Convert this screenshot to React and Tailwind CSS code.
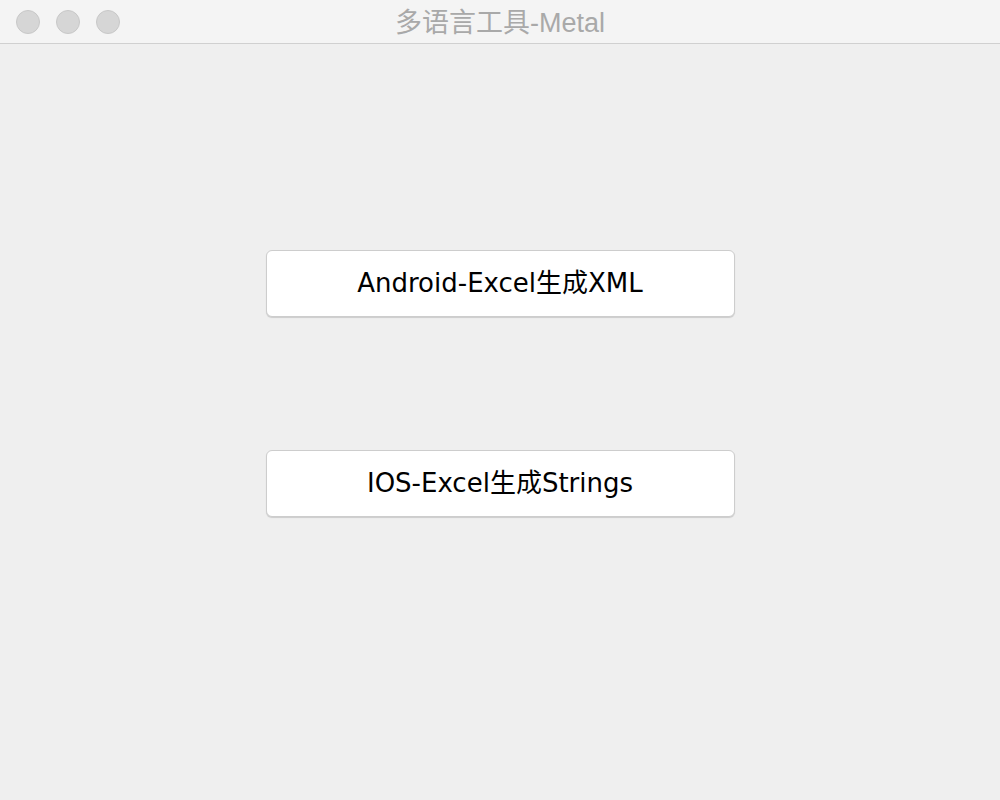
import React from "react";

export default function App() {
  return (
    <div className="w-[1000px] h-[800px] flex flex-col bg-[#efefef] font-['DejaVu_Sans','Noto_Sans_CJK_SC',sans-serif] overflow-hidden">
      {/* Title bar */}
      <div className="relative h-[44px] flex items-center justify-center bg-[#f4f4f4] border-b border-[#d0d0d0]">
        <div className="absolute left-[16px] top-[10px] flex gap-[16px]">
          <div className="w-[24px] h-[24px] rounded-full bg-[#d6d6d6] border border-[#c8c8c8]" />
          <div className="w-[24px] h-[24px] rounded-full bg-[#d6d6d6] border border-[#c8c8c8]" />
          <div className="w-[24px] h-[24px] rounded-full bg-[#d6d6d6] border border-[#c8c8c8]" />
        </div>
        <span className="pt-[4px] text-[27px] text-[#a9a9a9] font-['Liberation_Sans','Noto_Sans_CJK_SC',sans-serif] leading-none">
          多语言工具-Metal
        </span>
      </div>

      {/* Content */}
      <div className="flex flex-col items-center pt-[206px] gap-[133px]">
        <button className="w-[469px] h-[67px] bg-white rounded-[6px] border border-[#cdcdcd] shadow-[0_1px_1px_rgba(0,0,0,0.15)] text-[26px] text-black">
          Android-Excel生成XML
        </button>
        <button className="w-[469px] h-[67px] bg-white rounded-[6px] border border-[#cdcdcd] shadow-[0_1px_1px_rgba(0,0,0,0.15)] text-[26px] text-black">
          IOS-Excel生成Strings
        </button>
      </div>
    </div>
  );
}
